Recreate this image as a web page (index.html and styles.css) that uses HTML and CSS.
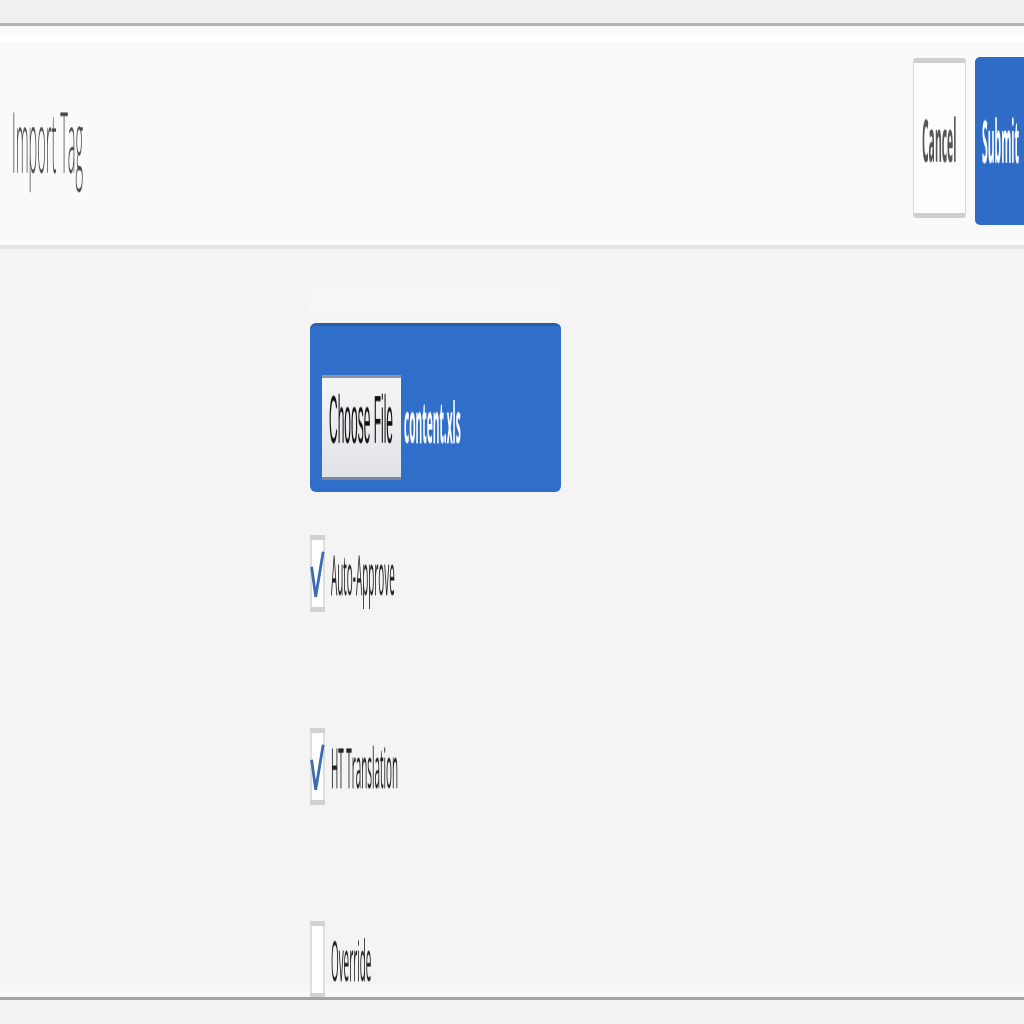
FILE: index.html
```html
<!DOCTYPE html>
<html lang="en">
<head>
<meta charset="utf-8">
<title>Import Tag</title>
<link rel="stylesheet" href="styles.css">
</head>
<body>
<div class="topbar"></div>
<header class="header">
  <h1 class="title"><span class="sq">Import Tag</span></h1>
  <div class="actions">
    <div class="btn btn-cancel"><span class="sq">Cancel</span></div>
    <div class="btn btn-submit"><span class="sq">Submit</span></div>
  </div>
</header>
<main class="main">
  <div class="form">
    <div class="file-hint"></div>
    <div class="file-field">
      <span class="file-btn"><span class="sq">Choose File</span></span>
      <span class="file-name"><span class="sq">content.xls</span></span>
    </div>
    <div class="checks">
      <label class="check-row">
        <svg class="cb" width="15" height="77" viewBox="0 0 15 77" aria-hidden="true">
          <rect x="0" y="0" width="15" height="77" fill="#dedede"/>
          <rect x="2" y="5" width="11" height="67" fill="#ffffff"/>
          <rect x="0" y="0" width="15" height="5" fill="#d2d2d2"/>
          <rect x="0" y="72" width="15" height="5" fill="#d2d2d2"/>
          <polyline points="1.6,31.7 5.7,61.7 13.2,16.7" fill="none" stroke="#3a6cb4" stroke-width="2.8" stroke-linejoin="miter"/>
        </svg>
        <span class="check-label"><span class="sq">Auto-Approve</span></span>
      </label>
      <label class="check-row">
        <svg class="cb" width="15" height="77" viewBox="0 0 15 77" aria-hidden="true">
          <rect x="0" y="0" width="15" height="77" fill="#dedede"/>
          <rect x="2" y="5" width="11" height="67" fill="#ffffff"/>
          <rect x="0" y="0" width="15" height="5" fill="#d2d2d2"/>
          <rect x="0" y="72" width="15" height="5" fill="#d2d2d2"/>
          <polyline points="1.6,31.7 5.7,61.7 13.2,16.7" fill="none" stroke="#3a6cb4" stroke-width="2.8" stroke-linejoin="miter"/>
        </svg>
        <span class="check-label"><span class="sq">HT Translation</span></span>
      </label>
      <label class="check-row">
        <svg class="cb" width="15" height="77" viewBox="0 0 15 77" aria-hidden="true">
          <rect x="0" y="0" width="15" height="77" fill="#dedede"/>
          <rect x="2" y="5" width="11" height="67" fill="#ffffff"/>
          <rect x="0" y="0" width="15" height="5" fill="#d2d2d2"/>
          <rect x="0" y="72" width="15" height="5" fill="#d2d2d2"/>
        </svg>
        <span class="check-label"><span class="sq">Override</span></span>
      </label>
    </div>
  </div>
</main>
<div class="footer"></div>
</body>
</html>
```
FILE: styles.css
```css
* {
  box-sizing: border-box;
  margin: 0;
  padding: 0;
}

html, body {
  width: 1024px;
  height: 1024px;
  overflow: hidden;
}

body {
  background: #f2f2f2;
  font-family: "Open Sans", "Liberation Sans", sans-serif;
}

.sq {
  display: inline-block;
  line-height: 1;
  white-space: nowrap;
  transform: scaleY(5.7);
  transform-origin: 50% 50%;
  will-change: transform;
}

.topbar {
  height: 26px;
  background: #f0f0f0;
  border-bottom: 3px solid #b5b5b5;
}

.header {
  height: 223px;
  display: flex;
  justify-content: space-between;
  align-items: flex-start;
  padding-left: 12px;
  background: linear-gradient(#fafafa 9px, #ffffff 9px, #ffffff 16px, #fafafa 16px);
  border-bottom: 4px solid #e5e5e5;
  overflow: hidden;
}

.title {
  margin-top: 107px;
  font-size: 14.6px;
  font-weight: 300;
  line-height: 1;
  color: #4a4a4a;
}

.actions {
  display: flex;
  align-items: flex-start;
  gap: 9px;
  margin-right: -3px;
}

.btn {
  display: flex;
  align-items: center;
  justify-content: center;
  font-weight: 700;
  font-size: 10.4px;
  line-height: 1;
}

.btn-cancel {
  margin-top: 32px;
  width: 53px;
  height: 160px;
  padding-top: 4px;
  background: #fdfdfd;
  border: 1px solid #dadada;
  border-top: 5px solid #cfcfcf;
  border-bottom: 5px solid #cfcfcf;
  border-radius: 3px;
  color: #555555;
}

.btn-submit {
  margin-top: 31px;
  width: 52px;
  height: 168px;
  background: #2e6cc8;
  border-radius: 5px 0 0 5px;
  color: #ffffff;
}

.main {
  height: 751px;
  background: linear-gradient(#f4f4f4 736px, #f8f8f8 736px);
  border-bottom: 3px solid #a3a3a3;
  overflow: hidden;
  padding-left: 310px;
  padding-top: 38px;
}

.file-hint {
  width: 251px;
  height: 28px;
  margin-bottom: 8px;
  background: linear-gradient(#f5f5f5, #f7f7f7);
}

.file-field {
  width: 251px;
  height: 169px;
  display: flex;
  align-items: flex-start;
  padding: 49px 0 0 12px;
  background: #2f6fca;
  border-top: 3px solid #2a5ea6;
  border-radius: 6px;
}

.file-btn {
  width: 79px;
  height: 105px;
  display: flex;
  align-items: center;
  justify-content: center;
  padding-bottom: 16px;
  background: linear-gradient(#f5f5f5, #e2e3e8);
  border-top: 3px solid #8a95a7;
  border-bottom: 3px solid #7b879c;
  font-family: "Liberation Sans", Arial, sans-serif;
  font-size: 12px;
  line-height: 1;
  color: #111111;
}

.file-name {
  margin-left: 3px;
  margin-top: 41px;
  font-size: 10.2px;
  font-weight: 700;
  line-height: 1;
  color: #ffffff;
}

.checks {
  display: flex;
  flex-direction: column;
  gap: 116px;
  margin-top: 43px;
}

.check-row {
  display: flex;
  align-items: center;
  height: 77px;
}

.cb {
  display: block;
  flex: none;
}

.check-label {
  margin-left: 6px;
  margin-top: 8px;
  font-size: 9.9px;
  line-height: 1;
  color: #222222;
}

.footer {
  height: 24px;
  background: #f2f2f2;
}
```
